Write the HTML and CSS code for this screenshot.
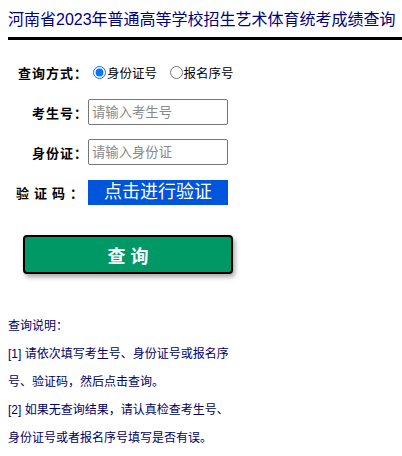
FILE: index.html
```html
<!DOCTYPE html>
<html lang="zh-CN">
<head>
    <meta charset="UTF-8">
    <meta name="viewport" content="width=device-width, initial-scale=1.0">
    <title>河南省2023年普通高等学校招生艺术体育统考成绩查询</title>
    <link rel="stylesheet" href="styles.css">
</head>
<body>
    <div class="title">河南省2023年普通高等学校招生艺术体育统考成绩查询</div>

    <form class="query-form">
        <div class="row">
            <label class="label">查询方式：</label>
            <div class="field radios">
                <label><input type="radio" name="type" checked>身份证号</label>
                <label><input type="radio" name="type">报名序号</label>
            </div>
        </div>
        <div class="row">
            <label class="label">考生号：</label>
            <div class="field"><input type="text" class="text-input" placeholder="请输入考生号"></div>
        </div>
        <div class="row">
            <label class="label">身份证：</label>
            <div class="field"><input type="text" class="text-input" placeholder="请输入身份证"></div>
        </div>
        <div class="row">
            <label class="label spaced">验证码：</label>
            <div class="field"><div class="verify">点击进行验证</div></div>
        </div>
        <button type="button" class="submit">查 询</button>
    </form>

    <div class="notes">
        <p>查询说明：</p>
        <p>[1] 请依次填写考生号、身份证号或报名序<br>号、验证码，然后点击查询。</p>
        <p>[2] 如果无查询结果，请认真检查考生号、<br>身份证号或者报名序号填写是否有误。</p>
    </div>
</body>
</html>
```

FILE: styles.css
```css
* {
    margin: 0;
    padding: 0;
    box-sizing: border-box;
}

body {
    font-family: "Liberation Sans", "Noto Sans CJK SC", sans-serif;
    background-color: #fff;
    color: #000;
    padding: 0 0 0 8px;
}

.title {
    color: #000080;
    font-size: 16px;
    line-height: 20px;
    padding-top: 10px;
    padding-bottom: 7px;
    border-bottom: 3px solid #000;
}

.query-form {
    padding-top: 12px;
}

.row {
    display: flex;
    align-items: center;
    height: 40px;
}

.label {
    width: 80px;
    text-align: right;
    font-size: 13px;
    font-weight: bold;
    letter-spacing: 1px;
}

.label.spaced {
    letter-spacing: 5px;
}

.field {
    font-size: 12.5px;
}

.radios label {
    display: inline-flex;
    align-items: center;
    margin-right: 4px;
}

.radios input {
    margin: 0 1px 0 5px;
    width: 13px;
    height: 13px;
}

.text-input {
    width: 140px;
    height: 26px;
    border: 1px solid #767676;
    border-radius: 2px;
    padding: 0 3px;
    font-size: 13.33px;
    font-family: "Liberation Sans", "Noto Sans CJK SC", sans-serif;
}

.text-input::placeholder {
    color: #8a8a8a;
}

.verify {
    width: 140px;
    height: 25px;
    background-color: #0055dd;
    color: #fff;
    font-size: 18px;
    line-height: 25px;
    text-align: center;
}

.submit {
    display: block;
    margin: 23px 0 0 15px;
    width: 210px;
    height: 39px;
    background-color: #009966;
    border: 2px solid #000;
    border-radius: 4px;
    box-shadow: 2px 3px 5px rgba(0, 0, 0, 0.35);
    color: #fff;
    font-size: 18px;
    font-weight: bold;
    font-family: "Liberation Sans", "Noto Sans CJK SC", sans-serif;
}

.notes {
    margin-top: 38px;
    color: #000066;
    font-size: 12px;
    line-height: 28px;
}
```
